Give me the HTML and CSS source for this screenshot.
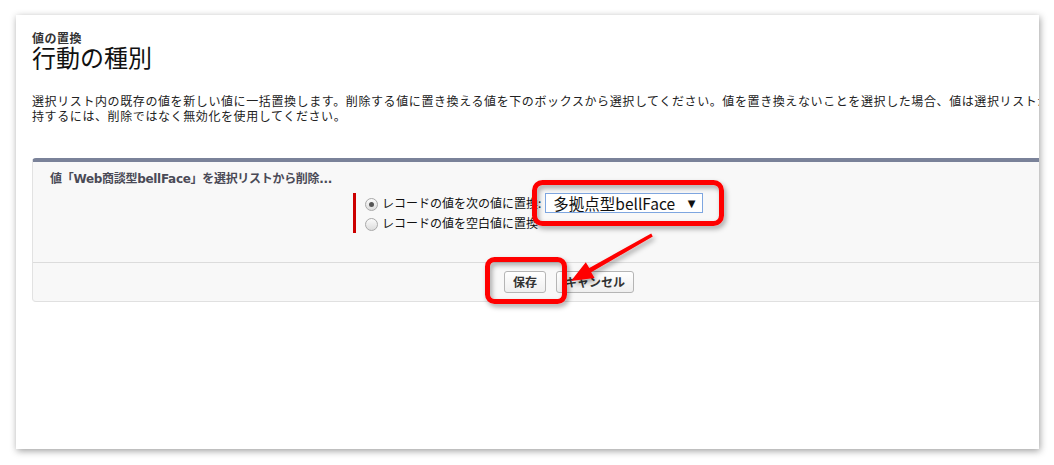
FILE: index.html
```html
<!DOCTYPE html>
<html lang="ja">
<head>
<meta charset="utf-8">
<title>値の置換</title>
<link rel="stylesheet" href="styles.css">
</head>
<body>
<div class="frame">
  <div class="card">
    <div class="page-type">値の置換</div>
    <h1 class="page-title">行動の種別</h1>
    <div class="desc">
      <div class="desc-line">選択リスト内の既存の値を新しい値に一括置換します。削除する値に置き換える値を下のボックスから選択してください。値を置き換えないことを選択した場合、値は選択リストから削除されますが、既存のレコードには残ります。値を保</div>
      <div class="desc-line">持するには、削除ではなく無効化を使用してください。</div>
    </div>
    <div class="panel">
      <div class="panel-head">値「Web商談型bellFace」を選択リストから削除...</div>
      <div class="panel-body">
        <div class="options">
          <div class="opt-row">
            <span class="radio checked"></span>
            <span class="opt-label">レコードの値を次の値に置換:</span>
            <div class="select"><span class="select-text">多拠点型bellFace</span><span class="select-arrow">▼</span></div>
          </div>
          <div class="opt-row">
            <span class="radio"></span>
            <span class="opt-label">レコードの値を空白値に置換</span>
          </div>
        </div>
      </div>
      <div class="panel-foot">
        <button class="btn">保存</button>
        <button class="btn">キャンセル</button>
      </div>
    </div>
  </div>
</div>
<svg class="annot" width="1054" height="465" viewBox="0 0 1054 465">
  <defs>
    <filter id="sh" x="-20%" y="-20%" width="140%" height="160%">
      <feDropShadow dx="2" dy="3" stdDeviation="2.5" flood-color="#000" flood-opacity="0.35"/>
    </filter>
  </defs>
  <g filter="url(#sh)">
    <rect x="534.5" y="182.5" width="187" height="41" rx="8" ry="8" fill="none" stroke="#ff0000" stroke-width="5"/>
    <rect x="487.5" y="259.5" width="77" height="42" rx="7" ry="7" fill="none" stroke="#ff0000" stroke-width="5"/>
    <polygon points="652.8,236.4 651.2,233.6 589.3,267.9 585.8,262.3 571,281 594.6,277.9 591.2,272.3" fill="#ff0000"/>
  </g>
</svg>
</body>
</html>
```
FILE: styles.css
```css
html, body {
  margin: 0;
  padding: 0;
  background: #ffffff;
}
body {
  font-family: "Liberation Sans", "Noto Sans CJK JP", sans-serif;
  color: #222;
  position: relative;
  width: 1054px;
  height: 465px;
  overflow: hidden;
}
.frame {
  padding: 15px 15px 16px 16px;
  height: 465px;
  box-sizing: border-box;
}
.card {
  background: #fff;
  height: 100%;
  box-sizing: border-box;
  padding: 17px 0 0 16px;
  overflow: hidden;
  box-shadow: 1px 2px 7px rgba(0, 0, 0, 0.38);
}
.page-type {
  font-size: 12px;
  line-height: 14px;
  font-weight: bold;
  color: #333;
  letter-spacing: 0.5px;
}
.page-title {
  margin: 0;
  font-size: 24px;
  line-height: 26px;
  font-weight: normal;
  color: #111;
}
.desc {
  margin-top: 23px;
  font-size: 12px;
  line-height: 15px;
  color: #222;
  letter-spacing: 0.6px;
}
.desc-line {
  white-space: nowrap;
}
.panel {
  margin-top: 33px;
  margin-right: -66px;
  border-top: 4px solid #7a8299;
  border-left: 1px solid #e2e2e2;
  border-bottom: 1px solid #e0e0e0;
  border-radius: 4px 0 0 4px;
  background: #f8f8f8;
}
.panel-head {
  padding: 9px 0 0 17px;
  font-size: 12px;
  line-height: 16px;
  font-weight: bold;
  color: #4a4a56;
  font-family: "DejaVu Sans", "Noto Sans CJK JP", sans-serif;
  letter-spacing: -0.3px;
}
.panel-body {
  padding: 6px 0 29px 320px;
}
.options {
  border-left: 3px solid #cc0000;
  padding-left: 9px;
}
.opt-row {
  display: flex;
  align-items: center;
  height: 20px;
}
.radio {
  width: 11px;
  height: 11px;
  border-radius: 50%;
  border: 1px solid #a9a9a9;
  background: linear-gradient(#fbfbfb, #dcdcdc);
  box-sizing: content-box;
  position: relative;
  margin-top: 3px;
  flex: none;
}
.radio.checked::after {
  content: "";
  position: absolute;
  left: 3px;
  top: 3px;
  width: 5px;
  height: 5px;
  border-radius: 50%;
  background: #555;
}
.opt-label {
  margin-left: 4px;
  font-size: 12px;
  color: #111;
  font-family: "Noto Sans CJK JP", sans-serif;
  line-height: 16px;
}
.select {
  margin-left: 4px;
  width: 158px;
  height: 20px;
  box-sizing: border-box;
  border: 1px solid #7ea6e0;
  background: #fff;
  display: flex;
  align-items: center;
  padding: 0 7px 0 7px;
  font-family: "Noto Sans CJK JP", sans-serif;
}
.select-text {
  font-size: 15.5px;
  color: #111;
  flex: 1;
  line-height: 18px;
  white-space: nowrap;
}
.select-arrow {
  font-size: 10px;
  color: #111;
  font-family: "DejaVu Sans", sans-serif;
}
.panel-foot {
  border-top: 1px solid #dcdcdc;
  display: flex;
  justify-content: center;
  gap: 10px;
  padding: 8px 0 8px 0;
}
.btn {
  height: 22px;
  padding: 0 8px;
  border: 1px solid #b5b5b5;
  border-radius: 3px;
  background: linear-gradient(#ffffff, #efefef);
  font-family: "Noto Sans CJK JP", sans-serif;
  font-size: 12px;
  font-weight: bold;
  color: #333;
  line-height: 20px;
}
.annot {
  position: absolute;
  left: 0;
  top: 0;
  pointer-events: none;
}
```
